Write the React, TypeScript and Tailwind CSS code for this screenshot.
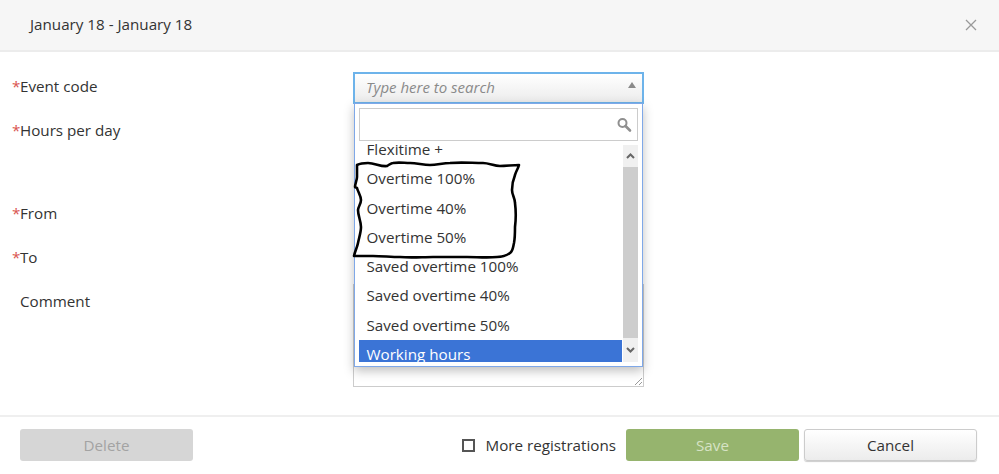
import React from 'react'

const options = [
  'Flexitime +',
  'Overtime 100%',
  'Overtime 40%',
  'Overtime 50%',
  'Saved overtime 100%',
  'Saved overtime 40%',
  'Saved overtime 50%',
  'Working hours',
]

function Label({text, required, className}: {text: string; required?: boolean; className: string}) {
  return (
    <div className={`flex h-[20px] items-center leading-[20px] ${className}`}>
      <span className="w-[8px] text-[#d9534f]">{required ? '*' : ''}</span>
      <span>{text}</span>
    </div>
  )
}

function Dropdown() {
  return (
    <div className="absolute left-[1px] top-[51px] z-10 h-[264px] w-[289px] border border-[#7fa8e8] bg-white px-[4px] pt-[4px] shadow-[0_4px_10px_rgba(0,0,0,0.25)]">
      <div className="flex h-[33px] items-center justify-end border border-[#cccccc] pr-[5px]">
        <svg width="16" height="16" viewBox="0 0 16 16" fill="none" stroke="#8f8f8f">
          <circle cx="6.5" cy="6" r="4" strokeWidth="2" />
          <path d="M9.5 9l4.5 4.5" strokeWidth="2.6" strokeLinecap="round" />
        </svg>
      </div>
      <div className="mt-[1px] flex h-[220px] gap-[1px]">
        <div className="h-full w-[264px] overflow-hidden">
          <ul className="-mt-[7px]">
            {options.map((option) => (
              <li
                key={option}
                className={`h-[29.3px] pl-[7.5px] leading-[29px] ${
                  option === 'Working hours' ? 'bg-[#3b74d6] text-white' : ''
                }`}
              >
                {option}
              </li>
            ))}
          </ul>
        </div>
        <div className="mt-[3px] flex h-[217px] w-[15px] flex-col bg-[#f0f0f0]">
          <div className="flex h-[22px] items-center justify-center">
            <svg width="9" height="6" viewBox="0 0 9 6" fill="none" stroke="#666666" strokeWidth="2">
              <path d="M1 5l3.5-3.5L8 5" />
            </svg>
          </div>
          <div className="h-[171px] bg-[#cdcdcd]" />
          <div className="flex flex-1 items-center justify-center">
            <svg width="9" height="6" viewBox="0 0 9 6" fill="none" stroke="#666666" strokeWidth="2">
              <path d="M1 1l3.5 3.5L8 1" />
            </svg>
          </div>
        </div>
      </div>
    </div>
  )
}

export default function App() {
  return (
    <div className="flex h-[474px] w-[999px] flex-col overflow-hidden bg-white font-['Open_Sans',sans-serif] text-[15.2px] text-[#333333]">
      <header className="flex h-[52px] items-center justify-between border-b-2 border-[#ececec] bg-[#f6f6f6] pl-[30px] pr-[22px]">
        <h1 className="pb-[1px] text-[15.2px] font-normal">January 18 - January 18</h1>
        <svg width="12" height="12" viewBox="0 0 12 12" stroke="#999999" strokeWidth="1.3">
          <path d="M1 1l10 10M11 1L1 11" />
        </svg>
      </header>

      <main className="relative flex h-[363px] pl-[12px] pt-[20px]">
        <div className="w-[341px]">
          <Label text="Event code" required className="mt-[4px]" />
          <Label text="Hours per day" required className="mt-[24px]" />
          <Label text="From" required className="mt-[63px]" />
          <Label text="To" required className="mt-[24px]" />
          <Label text="Comment" className="mt-[24px]" />
        </div>

        <div className="relative -mt-[20px] w-[291px] pt-[20px]">
          <div className="flex h-[32px] items-center justify-between border-2 border-[#6db3ea] bg-gradient-to-b from-white to-[#ececec] pl-[11px] pr-[6px] text-[15px] italic text-[#8a8a8a]">
            <span className="pb-[1px]">Type here to search</span>
            <svg width="8" height="6" viewBox="0 0 8 6" fill="#8a8a8a" className="mb-[6px]">
              <path d="M4 0l4 6H0z" />
            </svg>
          </div>
          <div className="relative mt-[180px] h-[103px] border border-[#cccccc] bg-white">
            <svg width="9" height="9" viewBox="0 0 9 9" stroke="#999999" className="absolute bottom-0 right-0">
              <path d="M1 8l7-7M5 8l3-3" />
            </svg>
          </div>
          <Dropdown />
        </div>

        {/* marker scribble drawn over the list */}
        <svg width="999" height="363" viewBox="0 52 999 363" fill="none" stroke="#000000" strokeWidth="2.6" strokeLinejoin="round" className="pointer-events-none absolute left-0 top-0 z-20">
          <path d="M357 165C361 163 364 163 368 163C375 163 381 167 387 166C389 165 391 163 393 163C399 162 404 163 410 163C417 163 423 165 430 165C437 165 443 163 450 163C461 162 472 163 483 163C489 163 494 166 500 166C506 166 513 165 519 165C518 169 516 171 515 175C513 180 512 185 512 190C512 195 515 198 515 203C516 211 516 219 515 227C515 233 515 238 514 243C513 247 513 251 510 253C506 256 502 257 497 257C487 258 477 257 467 257C456 257 444 257 433 257C422 257 411 258 400 257C391 257 382 256 373 256C367 256 360 256 354 256C355 251 357 248 358 243C359 238 361 232 361 227C361 221 358 216 358 210C358 207 361 204 361 200C361 196 358 192 357 188C356 187 355 188 355 187C355 184 357 180 357 177C357 173 357 169 357 165Z" />
        </svg>
      </main>

      <footer className="flex h-[59px] items-start justify-between border-t-2 border-[#efefef] pl-[20px] pr-[22px] pt-[12px]">
        <button type="button" className="h-[32px] w-[173px] rounded-[3px] bg-[#d6d6d6] text-[#a3a3a3]">
          Delete
        </button>
        <div className="flex items-center">
          <span className="h-[13px] w-[13px] border-2 border-[#555555] bg-white" />
          <span className="ml-[10px] mr-[10px]">More registrations</span>
          <button type="button" className="h-[32px] w-[173px] rounded-[3px] bg-[#96b46e] text-[#d6e3c5]">
            Save
          </button>
          <button type="button" className="ml-[5px] h-[32px] w-[173px] rounded-[3px] border border-[#cccccc] bg-gradient-to-b from-white to-[#ececec] shadow-[0_1px_1px_rgba(0,0,0,0.2)]">
            Cancel
          </button>
        </div>
      </footer>
    </div>
  )
}
